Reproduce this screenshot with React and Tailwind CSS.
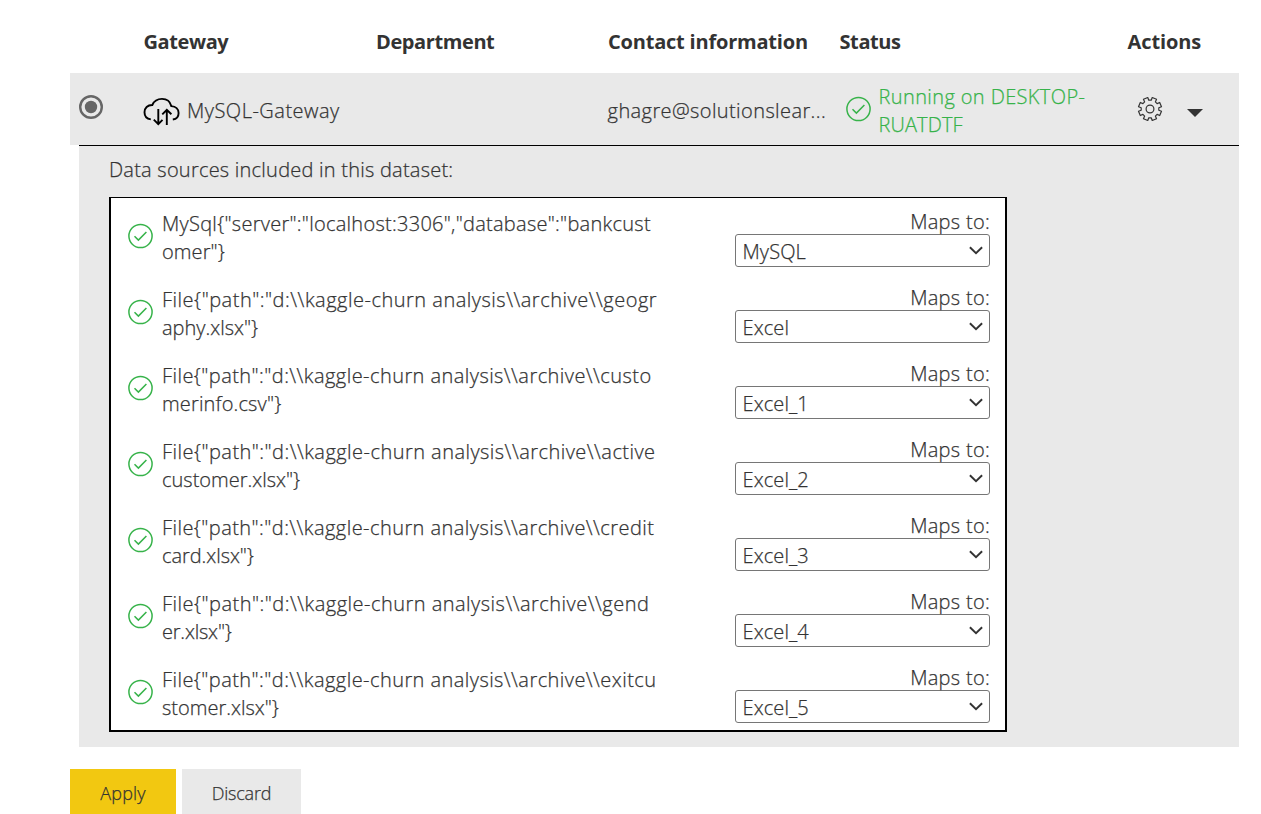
import React from "react";

const sources = [
  { first: 'MySql{"server":"localhost:3306","database":"bankcust', second: 'omer"}', firstTracking: "tracking-[0.27px]", secondTracking: "tracking-[0.1px]", target: "MySQL" },
  { first: 'File{"path":"d:\\\\kaggle-churn analysis\\\\archive\\\\geogr', second: 'aphy.xlsx"}', firstTracking: "tracking-[0.5px]", secondTracking: "tracking-[0px]", target: "Excel" },
  { first: 'File{"path":"d:\\\\kaggle-churn analysis\\\\archive\\\\custo', second: 'merinfo.csv"}', firstTracking: "tracking-[0.44px]", secondTracking: "tracking-[0.15px]", target: "Excel_1" },
  { first: 'File{"path":"d:\\\\kaggle-churn analysis\\\\archive\\\\active', second: 'customer.xlsx"}', firstTracking: "tracking-[0.46px]", secondTracking: "tracking-[0px]", target: "Excel_2" },
  { first: 'File{"path":"d:\\\\kaggle-churn analysis\\\\archive\\\\credit', second: 'card.xlsx"}', firstTracking: "tracking-[0.44px]", secondTracking: "tracking-[-0.05px]", target: "Excel_3" },
  { first: 'File{"path":"d:\\\\kaggle-churn analysis\\\\archive\\\\gend', second: 'er.xlsx"}', firstTracking: "tracking-[0.48px]", secondTracking: "tracking-[-0.2px]", target: "Excel_4" },
  { first: 'File{"path":"d:\\\\kaggle-churn analysis\\\\archive\\\\exitcu', second: 'stomer.xlsx"}', firstTracking: "tracking-[0.44px]", secondTracking: "tracking-[0px]", target: "Excel_5" },
];

function CheckCircle() {
  return (
    <svg className="block h-[26px] w-[26px] shrink-0" viewBox="0 0 26 26" fill="none" stroke="#37b34a" strokeWidth="1.5">
      <circle cx="13.5" cy="13" r="11.6" />
      <path d="M7.500 13.3l3.9 3.8 8-8.2" />
    </svg>
  );
}

function CloudIcon() {
  return (
    <svg className="block h-[30px] w-[38px] shrink-0" viewBox="0 0 38 30" fill="none" stroke="#000" strokeWidth="1.9">
      <path d="M7.800 22.400C4.100 21.800 1.500 19.200 1.500 15.200c0-4.2 3.100-7.300 7.800-7.200C11 4.100 14.600 1.900 19 1.900c4.700 0 8.200 2.700 9.300 7.200 4.400.3 7.300 3 7.300 6.800 0 3.600-2.300 6.100-5.800 6.600" />
      <path d="M15.300 12v15M10.800 22.600l4.500 4.500 4.200-4.200M23.800 28V13M19.300 17.300l4.500-4.500 4.600 4.500" />
    </svg>
  );
}

// Outline of an eight-toothed gear, built tooth by tooth around the centre.
const gearPath = (() => {
  const points = [];
  for (let i = 0; i < 8; i++) {
    const base = i * 45 + 22.5;
    [[-14.5, 8.9], [-11.5, 11.7], [11.5, 11.7], [14.5, 8.9]].forEach(([offset, r]) => {
      const a = ((base + offset) * Math.PI) / 180;
      points.push(`${(13 + r * Math.cos(a)).toFixed(2)} ${(13 + r * Math.sin(a)).toFixed(2)}`);
    });
  }
  return `M${points.join("L")}Z`;
})();

function GearIcon() {
  return (
    <svg className="block h-[26px] w-[26px] shrink-0" viewBox="0 0 26 26" fill="none" stroke="#333" strokeWidth="1.2" strokeLinejoin="round">
      <path d={gearPath} />
      <circle cx="13" cy="13" r="3.900" />
    </svg>
  );
}

function SourceRow({ source }) {
  return (
    <div className="flex h-[76px] pl-[16px] pr-[15px]">
      <div className="pt-[25px]"><CheckCircle /></div>
      <div className="ml-[9px] w-[573px] whitespace-nowrap pt-[12px] leading-[28px]">
        <div className={source.firstTracking}>{source.first}</div>
        <div className={source.secondTracking}>{source.second}</div>
      </div>
      <div className="w-[255px] pt-[10px]">
        <div className="h-[26px] text-right leading-[28px] tracking-[0.3px]">Maps to:</div>
        <button className="flex h-[33px] w-full items-center justify-between rounded-[3px] border border-[#767676] bg-white pl-[6.5px] pr-[6px]">
          <span className="pt-[2px] leading-[28px] tracking-[0.1px]">{source.target}</span>
          <svg className="mb-[2px] block h-[14px] w-[14px]" viewBox="0 0 14 14" fill="none" stroke="#333" strokeWidth="1.900">
            <path d="M0.900 4.200l6.100 6 6.100-6" />
          </svg>
        </button>
      </div>
    </div>
  );
}

export default function App() {
  return (
    <div className="h-[814px] w-[1261px] overflow-hidden bg-white pl-[70px] font-['Open_Sans',sans-serif] text-[20px] font-light text-[#333] [-webkit-text-stroke:0.25px_currentColor]">
      <div className="flex h-[73px] whitespace-nowrap pl-[73.5px] pt-[28px] font-bold leading-[28px] tracking-[-0.2px] [-webkit-text-stroke:0px]">
        <div className="w-[232.5px] tracking-[-0.4px]">Gateway</div>
        <div className="w-[232px] tracking-[-0.4px]">Department</div>
        <div className="w-[231.5px]">Contact information</div>
        <div className="w-[288px] tracking-[-0.4px]">Status</div>
        <div className="tracking-[-0.1px]">Actions</div>
      </div>
      <div className="flex h-[72px] w-[1169px] whitespace-nowrap bg-[#e9e9e9] leading-[28px]">
        <div className="w-[73px] pl-[9px] pt-[22px]">
          <svg className="block h-[24px] w-[24px]" viewBox="0 0 24 24">
            <circle cx="12" cy="12" r="10.800" fill="none" stroke="#666" strokeWidth="2.400" />
            <circle cx="12" cy="12" r="6.200" fill="#666" />
          </svg>
        </div>
        <div className="flex w-[464px] pt-[24px]">
          <CloudIcon />
          <span className="ml-[6px] tracking-[0.5px]">MySQL-Gateway</span>
        </div>
        <div className="w-[238px] pl-[0.6px] pt-[24px] tracking-[0.4px]">ghagre@solutionslear...</div>
        <div className="flex w-[292px] text-[#37b34a]">
          <div className="pt-[23px]"><CheckCircle /></div>
          <div className="ml-[7.5px] pt-[10px]">
            <div className="tracking-[0.38px]">Running on DESKTOP-</div>
            <div className="tracking-[0.1px]">RUATDTF</div>
          </div>
        </div>
        <div className="flex pt-[23px]">
          <GearIcon />
          <svg className="ml-[23px] mt-[12px] block h-[9px] w-[18px]" viewBox="0 0 18 9"><path d="M1 1h16L9 9z" fill="#333" /></svg>
        </div>
      </div>
      <div className="ml-[9px] h-[602px] w-[1160px] border-t border-black bg-[#e9e9e9] pl-[30px] pt-[10px]">
        <div className="h-[41px] leading-[28px] tracking-[0.23px]">Data sources included in this dataset:</div>
        <div className="w-[898px] border-2 border-t border-black bg-white">
          {sources.map((source) => <SourceRow key={source.target} source={source} />)}
        </div>
      </div>
      <div className="mt-[22px] flex gap-[6px] text-[18px]">
        <button className="h-[45px] w-[106px] bg-[#f2c811] pt-[4px] tracking-[0.2px]">Apply</button>
        <button className="h-[45px] w-[119px] bg-[#e9e9e9] pt-[4px] tracking-[-0.2px]">Discard</button>
      </div>
    </div>
  );
}
